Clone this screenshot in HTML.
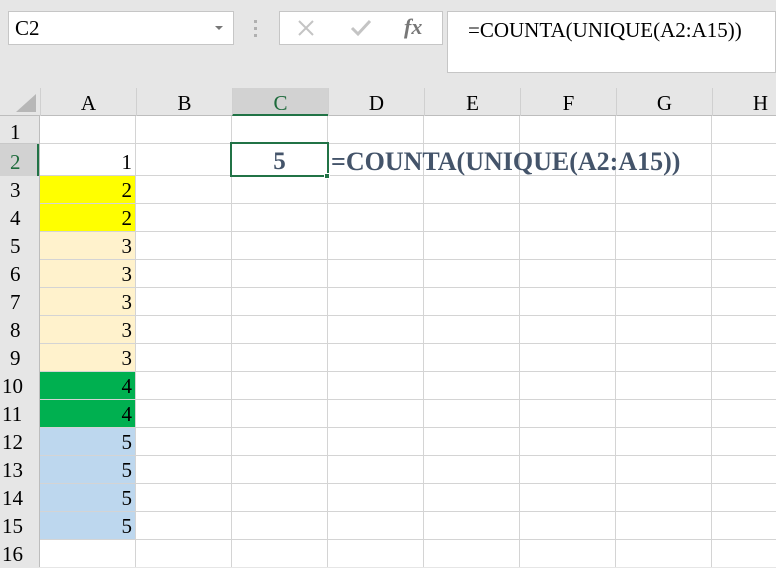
<!DOCTYPE html>
<html><head><style>
*{margin:0;padding:0;box-sizing:border-box}
body{width:776px;height:567px;overflow:hidden;background:#e6e6e6;position:relative;font-family:"Liberation Serif","Times New Roman",serif;}
div{font-family:"Liberation Serif","Times New Roman",serif;}
.a{position:absolute}
.vl{position:absolute;top:116px;height:451px;width:1px;background:#d4d4d4}
.hl{position:absolute;left:40px;width:736px;height:1px;background:#d4d4d4}
.rh{position:absolute;left:0;width:39px;font-size:21px;color:#000;padding-left:10px;line-height:28px}
.ch{position:absolute;top:88px;height:28px;width:96px;text-align:center;font-size:21px;line-height:30px;border-left:1px solid #d0d0d0}
.num{position:absolute;left:40px;width:95px;text-align:right;padding-right:3px;font-size:21px;line-height:28px}
</style></head><body>
<div class="a" style="left:8px;top:11px;width:226px;height:34px;background:#fff;border:1px solid #c6c6c6;font-size:21px;line-height:33px;padding-left:6px">C2</div>
<div class="a" style="left:215px;top:26px;width:0;height:0;border-left:4px solid transparent;border-right:4px solid transparent;border-top:4px solid #777"></div>
<div class="a" style="left:254px;top:20px;width:3px;height:3px;background:#b0b0b0"></div>
<div class="a" style="left:254px;top:27px;width:3px;height:3px;background:#b0b0b0"></div>
<div class="a" style="left:254px;top:34px;width:3px;height:3px;background:#b0b0b0"></div>
<div class="a" style="left:279px;top:11px;width:164px;height:34px;background:#fff;border:1px solid #c6c6c6"></div>
<svg class="a" style="left:296px;top:18px" width="20" height="20"><path d="M3 3L17 17M17 3L3 17" stroke="#c4c4c4" stroke-width="2"/></svg>
<svg class="a" style="left:350px;top:18px" width="22" height="20"><path d="M2 10L8 16L20 3" stroke="#c4c4c4" stroke-width="3" fill="none"/></svg>
<div class="a" style="left:404px;top:14px;font-size:22px;font-style:italic;font-weight:bold;color:#777">fx</div>
<div class="a" style="left:447px;top:11px;width:329px;height:62px;background:#fff;border:1px solid #c6c6c6;font-size:21px;padding-left:20px;line-height:36px;color:#000">=COUNTA(UNIQUE(A2:A15))</div>

<div class="a" style="left:0;top:116px;width:776px;height:451px;background:#fff"></div>
<div class="a" style="left:0;top:88px;width:776px;height:28px;background:#e6e6e6;border-bottom:1px solid #bdbdbd"></div>
<svg class="a" style="left:14px;top:92px" width="24" height="22"><path d="M22 2L22 20L2 20Z" fill="#b7b7b7"/></svg>
<div class="a" style="left:0;top:116px;width:40px;height:451px;background:#e6e6e6;border-right:1px solid #bdbdbd"></div>

<div class="ch" style="left:40px">A</div>
<div class="ch" style="left:136px">B</div>
<div class="ch" style="left:232px;background:#d2d2d2;color:#1e6b3c;border-bottom:2px solid #217346">C</div>
<div class="ch" style="left:328px">D</div>
<div class="ch" style="left:424px">E</div>
<div class="ch" style="left:520px">F</div>
<div class="ch" style="left:616px">G</div>
<div class="ch" style="left:712px">H</div>

<div class="a" style="left:40px;top:176px;width:95px;height:56px;background:#ffff00"></div>
<div class="a" style="left:40px;top:232px;width:95px;height:140px;background:#fff2cc"></div>
<div class="a" style="left:40px;top:372px;width:95px;height:56px;background:#00b050"></div>
<div class="a" style="left:40px;top:428px;width:95px;height:112px;background:#bdd7ee"></div>

<div class="vl" style="left:135px"></div><div class="vl" style="left:231px"></div><div class="vl" style="left:327px"></div><div class="vl" style="left:423px"></div><div class="vl" style="left:519px"></div><div class="vl" style="left:615px"></div><div class="vl" style="left:711px"></div>

<div class="hl" style="top:143px"></div><div class="hl" style="top:175px"></div><div class="hl" style="top:203px"></div><div class="hl" style="top:231px"></div><div class="hl" style="top:259px"></div><div class="hl" style="top:287px"></div><div class="hl" style="top:315px"></div><div class="hl" style="top:343px"></div><div class="hl" style="top:371px"></div><div class="hl" style="top:399px"></div><div class="hl" style="top:427px"></div><div class="hl" style="top:455px"></div><div class="hl" style="top:483px"></div><div class="hl" style="top:511px"></div><div class="hl" style="top:539px"></div>

<div class="a" style="left:0;top:143px;width:39px;height:1px;background:#c8c8c8"></div>
<div class="a" style="left:0;top:144px;width:39px;height:32px;background:#d2d2d2;border-right:2px solid #217346"></div>
<div class="rh" style="top:118px">1</div>
<div class="rh" style="top:148px;color:#1e6b3c">2</div>
<div class="rh" style="top:176px">3</div><div class="rh" style="top:204px">4</div><div class="rh" style="top:232px">5</div><div class="rh" style="top:260px">6</div><div class="rh" style="top:288px">7</div><div class="rh" style="top:316px">8</div><div class="rh" style="top:344px">9</div>
<div class="rh" style="top:372px;padding-left:2px">10</div><div class="rh" style="top:400px;padding-left:2px">11</div><div class="rh" style="top:428px;padding-left:2px">12</div><div class="rh" style="top:456px;padding-left:2px">13</div><div class="rh" style="top:484px;padding-left:2px">14</div><div class="rh" style="top:512px;padding-left:2px">15</div><div class="rh" style="top:540px;padding-left:2px">16</div>

<div class="num" style="top:148px">1</div>
<div class="num" style="top:176px">2</div><div class="num" style="top:204px">2</div>
<div class="num" style="top:232px">3</div><div class="num" style="top:260px">3</div><div class="num" style="top:288px">3</div><div class="num" style="top:316px">3</div><div class="num" style="top:344px">3</div>
<div class="num" style="top:372px">4</div><div class="num" style="top:400px">4</div>
<div class="num" style="top:428px">5</div><div class="num" style="top:456px">5</div><div class="num" style="top:484px">5</div><div class="num" style="top:512px">5</div>

<div class="a" style="left:230px;top:142px;width:99px;height:35px;border:2px solid #217346"></div>
<div class="a" style="left:324px;top:173px;width:6px;height:6px;background:#217346;border:1px solid #fff"></div>
<div class="a" style="left:232px;top:146px;width:95px;text-align:center;font-size:25px;line-height:32px;font-weight:bold;color:#44546a">5</div>
<div class="a" style="left:331px;top:146px;font-size:26px;line-height:32px;font-weight:bold;color:#44546a;white-space:nowrap">=COUNTA(UNIQUE(A2:A15))</div>
</body></html>
